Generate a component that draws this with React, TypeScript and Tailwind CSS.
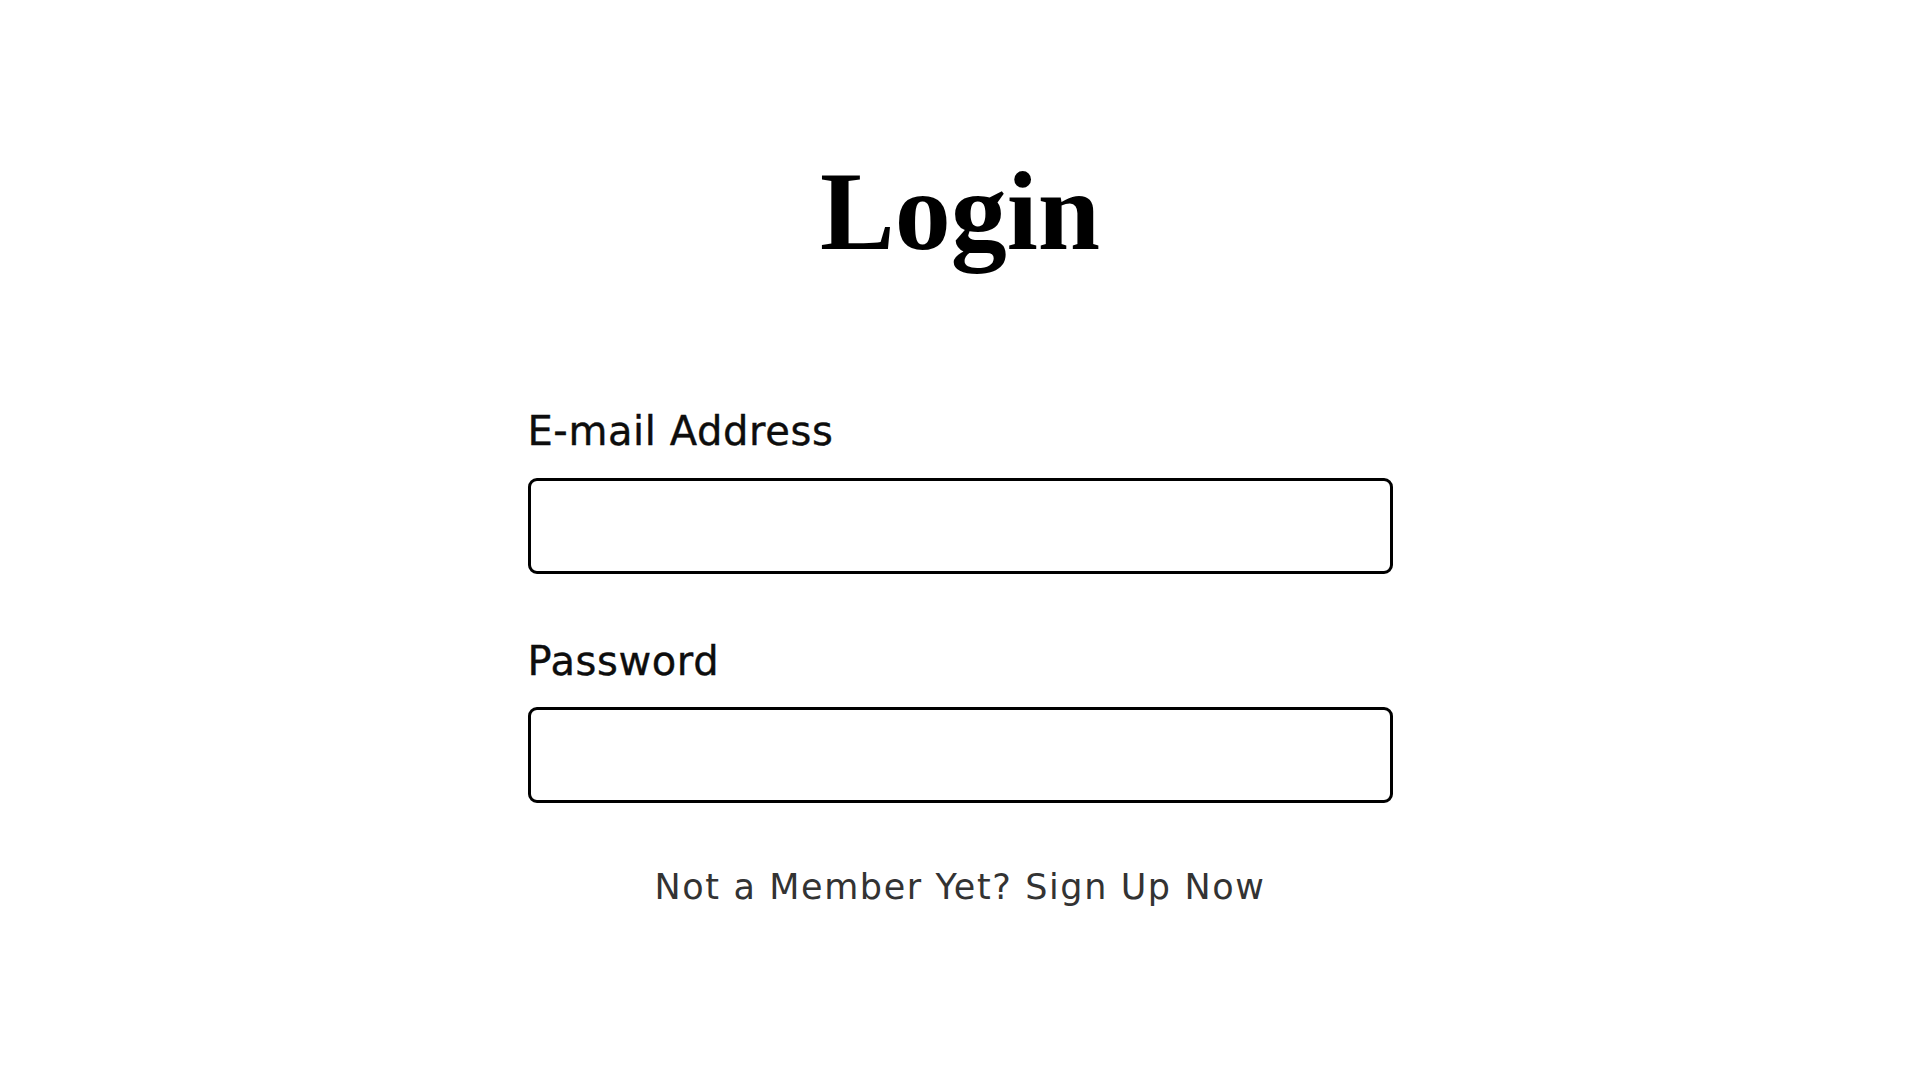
export default function App() {
  return (
    <main className="min-h-screen w-full bg-white font-['DejaVu_Sans',sans-serif]">
      <div className="mx-auto flex w-[865px] flex-col pt-[155px]">
        <h1 className="text-center font-['Liberation_Serif',serif] text-[112px] font-bold leading-none text-black">
          Login
        </h1>

        <form className="mt-[144px] flex flex-col">
          <label htmlFor="email" className="text-[40px] leading-none tracking-[0.6px] text-[#0d0d0d] [-webkit-text-stroke:0.4px_#0d0d0d]">
            E-mail Address
          </label>
          <input
            id="email"
            type="email"
            className="mt-[27px] h-[96px] w-full rounded-[9px] border-[3px] border-black bg-white px-4 outline-none"
          />

          <label htmlFor="password" className="mt-[67px] text-[40px] leading-none tracking-[0.6px] text-[#0d0d0d] [-webkit-text-stroke:0.4px_#0d0d0d]">
            Password
          </label>
          <input
            id="password"
            type="password"
            className="mt-[26px] h-[96px] w-full rounded-[9px] border-[3px] border-black bg-white px-4 outline-none"
          />
        </form>

        <a href="#" className="mt-[67px] text-center text-[35px] leading-none tracking-[1.6px] text-[#333]">
          Not a Member Yet? Sign Up Now
        </a>
      </div>
    </main>
  )
}
